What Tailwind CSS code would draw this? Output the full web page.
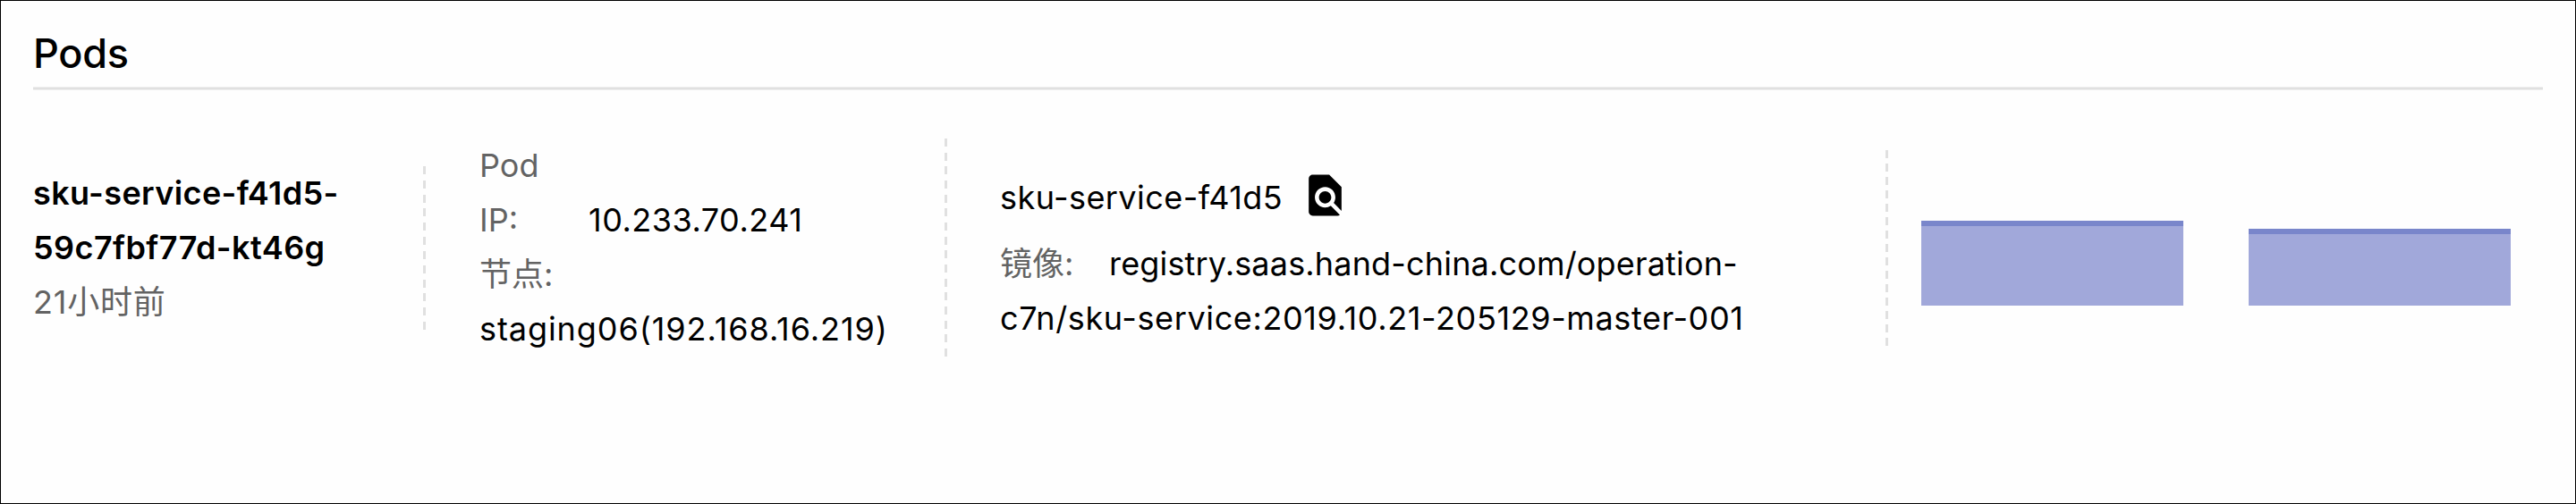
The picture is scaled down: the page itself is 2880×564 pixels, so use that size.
<!DOCTYPE html>
<html lang="zh-CN">
<head>
<meta charset="utf-8">
<title>Pods</title>
<script src="https://cdn.jsdelivr.net/npm/@tailwindcss/browser@4"></script>
</head>
<body class="h-[564px] w-[2880px] overflow-hidden border border-black bg-[#fefefe] font-['Inter','Noto_Sans_CJK_SC',sans-serif] text-[36px] leading-[61px] text-black">
  <header class="mx-[36px] h-[100px]">
    <h1 class="h-[96px] pt-[28px] text-[45px] font-medium leading-[61px] tracking-[-0.3px]">Pods</h1>
    <div class="h-[4px] border-y border-[#eeeeee] bg-[#e0e0e0]"></div>
  </header>
  <main class="ml-[36px] flex items-start">
    <section class="mt-[85px] flex h-[184px] w-[439px] justify-between">
      <div>
        <div class="whitespace-nowrap font-[560] tracking-[0.38px]">sku-service-f41d5-<br><span class="tracking-[0.42px]">59c7fbf77d-kt46g</span></div>
        <div class="tracking-[0.8px] text-[#636363]">21小时前</div>
      </div>
      <div class="h-[183px] w-[3px] bg-[repeating-linear-gradient(to_bottom,#e0e0e0_0_9px,transparent_9px_15.82px)]"></div>
    </section>
    <section class="ml-[60px] mt-[54px] flex h-[245px] w-[523px] justify-between whitespace-nowrap">
      <div class="flex flex-col">
        <div class="text-[#636363]">Pod</div>
        <div class="flex"><span class="w-[122px] text-[#636363]">IP:</span><span class="tracking-[0.5px]">10.233.70.241</span></div>
        <div class="text-[#636363]">节点:</div>
        <div class="tracking-[0.93px]">staging06(192.168.16.219)</div>
      </div>
      <div class="h-[244px] w-[3px] bg-[repeating-linear-gradient(to_bottom,#e0e0e0_0_9px,transparent_9px_15.67px)]"></div>
    </section>
    <section class="ml-[59px] mt-[67px] flex h-[220px] w-[993px] justify-between whitespace-nowrap">
      <div class="mt-[23px] flex flex-col">
        <div class="flex h-[74px] items-start"><span class="w-[336px] tracking-[0.44px]">sku-service-f41d5</span>
          <svg class="size-[55px]" viewBox="0 0 24 24" fill="#000"><path d="M20 19.59V8l-6-6H6c-1.100 0-1.990.9-1.990 2L4 20c0 1.100.89 2 1.990 2H18c.450 0 .850-.150 1.190-.400l-4.430-4.430c-.800.520-1.740.830-2.760.830-2.760 0-5-2.240-5-5s2.240-5 5-5 5 2.240 5 5c0 1.020-.310 1.960-.830 2.750L20 19.590zM9 13c0 1.660 1.340 3 3 3s3-1.340 3-3-1.340-3-3-3-3 1.340-3 3z"/></svg>
        </div>
        <div class="flex"><span class="w-[122px] text-[#636363]">镜像:</span><span class="tracking-[0.17px]">registry.saas.hand-china.com/operation-</span></div>
        <div class="tracking-[0.62px]">c7n/sku-service:2019.10.21-205129-master-001</div>
      </div>
      <div class="h-[219px] w-[3px] bg-[repeating-linear-gradient(to_bottom,#e0e0e0_0_9px,transparent_9px_15px)]"></div>
    </section>
    <section class="ml-[37px] mt-[146px] flex h-[95px] items-end gap-[73px]">
      <div class="h-[95px] w-[293px] border-t-[6px] border-[#7986cb] bg-[#a1a8da]"></div>
      <div class="h-[86px] w-[293px] border-t-[6px] border-[#7986cb] bg-[#a1a8da]"></div>
    </section>
  </main>
</body>
</html>
